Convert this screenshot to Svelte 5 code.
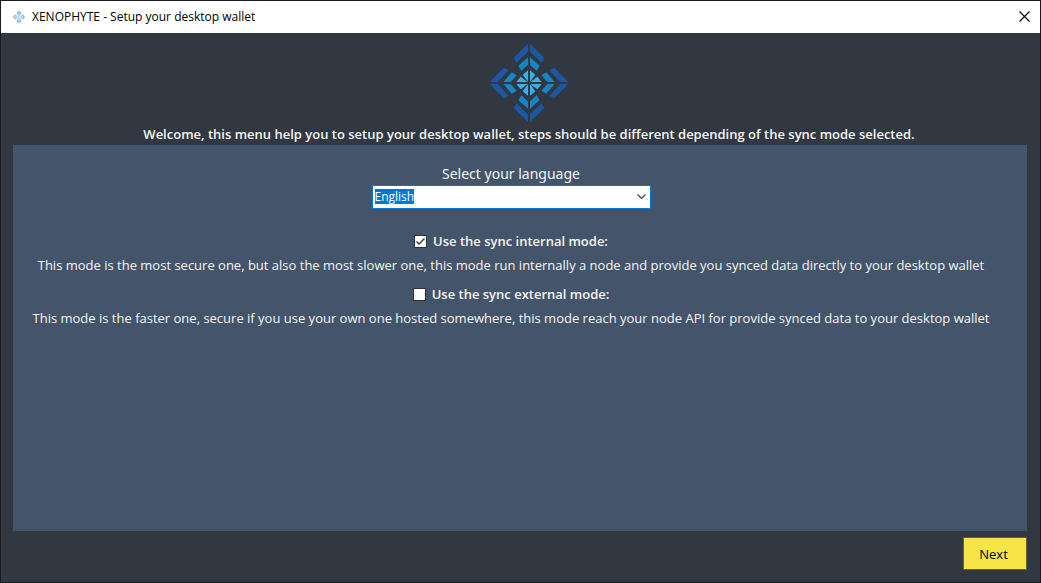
<script>
  let language = $state('English');
  let internal = $state(true);
  let external = $state(false);
  const turns = [0, 90, 180, 270];
</script>

{#snippet logo(small)}
  <svg class={small ? 'mark' : 'logo'} viewBox="-120 -120 240 240" aria-hidden="true">
    {#each turns as turn}
      <g transform="rotate({turn})">
        <path fill={small ? '#3f7fc4' : '#1b57a3'} d="M3-118 46-75 38-61 3-94ZM118-3 75-46 61-38 94-3Z" />
        <path fill={small ? '#4f9fd6' : '#1585c5'} d="M3-77 32-52 23-37 3-55ZM77-3 52-32 37-23 55-3Z" />
        <path fill={small ? '#6fb8e6' : '#36b0e6'} d="M3-38 19-25 3-4ZM38-3 25-19 4-3Z" />
      </g>
    {/each}
  </svg>
{/snippet}

<div class="window">
  <header class="titlebar">
    {@render logo(true)}
    <span class="title">XENOPHYTE - Setup your desktop wallet</span>
    <button class="close" aria-label="Close">
      <svg viewBox="0 0 11 11" width="11" height="11"><path d="M.5.5l10 10M10.5.5l-10 10" stroke="#000" stroke-width="1.1" /></svg>
    </button>
  </header>

  <main>
    <div class="intro">
      {@render logo(false)}
      <h1>Welcome, this menu help you to setup your desktop wallet, steps should be different depending of the sync mode selected.</h1>
    </div>

    <section class="panel">
      <label class="language" for="language">Select your language</label>
      <select id="language" bind:value={language}>
        <option>English</option>
      </select>

      <div class="mode first">
        <label><input type="checkbox" bind:checked={internal} />Use the sync internal mode:</label>
        <p>This mode is the most secure one, but also the most slower one, this mode run internally a node and provide you synced data directly to your desktop wallet</p>
      </div>
      <div class="mode">
        <label><input type="checkbox" bind:checked={external} />Use the sync external mode:</label>
        <p>This mode is the faster one, secure if you use your own one hosted somewhere, this mode reach your node API for provide synced data to your desktop wallet</p>
      </div>
    </section>

    <footer><button class="next">Next</button></footer>
  </main>
</div>

<style>
  :global(body) { margin: 0; }
  .window {
    box-sizing: border-box;
    min-height: 100vh;
    display: flex;
    flex-direction: column;
    border: 1px solid #1c1c20;
    background: #313842;
    color: #f5f5f5;
    font-family: "Open Sans", "Noto Sans", sans-serif;
    font-size: 13px;
  }
  .titlebar {
    display: flex;
    align-items: center;
    height: 32px;
    padding-left: 12px;
    background: #fff;
    color: #000;
  }
  .mark { width: 12px; height: 12px; }
  .title { flex: 1; margin-left: 7px; font-size: 12px; line-height: 16px; }
  .close {
    display: grid;
    place-items: center;
    width: 30px;
    height: 32px;
    padding: 0 1px 2px 0;
    border: 0;
    background: none;
  }
  main { flex: 1; display: flex; flex-direction: column; padding: 10px 13px 12px 12px; }
  .intro { display: flex; flex-direction: column; align-items: center; padding-left: 18px; }
  .logo { width: 80px; height: 80px; }
  h1 { margin: 0; font-size: 13px; line-height: 22px; font-weight: 600; }
  .panel {
    flex: 1;
    display: flex;
    flex-direction: column;
    align-items: center;
    padding: 18px 18px 0 0;
    background: #44546a;
  }
  .language { font-family: "Noto Sans", "Open Sans", sans-serif; font-size: 14px; line-height: 22px; }
  select {
    appearance: none;
    box-sizing: border-box;
    width: 279px;
    height: 24px;
    padding: 0 24px 1px 2px;
    border: 1px solid #0078d7;
    border-radius: 0;
    outline: 0;
    color: #fff;
    font: 12px "Open Sans", "Noto Sans", sans-serif;
    background:
      url("data:image/svg+xml,%3Csvg xmlns='http://www.w3.org/2000/svg' width='9' height='6'%3E%3Cpath d='M.5.5l4 4 4-4' fill='none' stroke='%23444' stroke-width='1.2'/%3E%3C/svg%3E") right 4px center no-repeat,
      linear-gradient(#0078d7, #0078d7) 2px 3px / 39px 15px no-repeat,
      #fff;
  }
  option { color: #000; }
  .mode { display: flex; flex-direction: column; align-items: center; margin-top: 5px; }
  .first { margin-top: 20px; }
  .mode label { display: flex; align-items: center; gap: 6px; font-size: 13px; line-height: 24px; font-weight: 600; }
  input {
    appearance: none;
    box-sizing: border-box;
    width: 13px;
    height: 13px;
    margin: 0;
    border: 1px solid #333;
    background: #fff center no-repeat;
  }
  input:checked {
    background-image: url("data:image/svg+xml,%3Csvg xmlns='http://www.w3.org/2000/svg' width='11' height='11'%3E%3Cpath d='M1.5 5.5l2.5 2.500 5.500-5.500' fill='none' stroke='%23333' stroke-width='1.300'/%3E%3C/svg%3E");
  }
  p { margin: 0; font-size: 13px; line-height: 24px; }
  footer { display: flex; justify-content: flex-end; padding-top: 6px; }
  .next {
    width: 64px;
    height: 33px;
    padding: 0 3px 0 0;
    border: 1px solid #6c6420;
    background: #f7e547;
    color: #000;
    font: 13px "Open Sans", "Noto Sans", sans-serif;
  }
</style>
